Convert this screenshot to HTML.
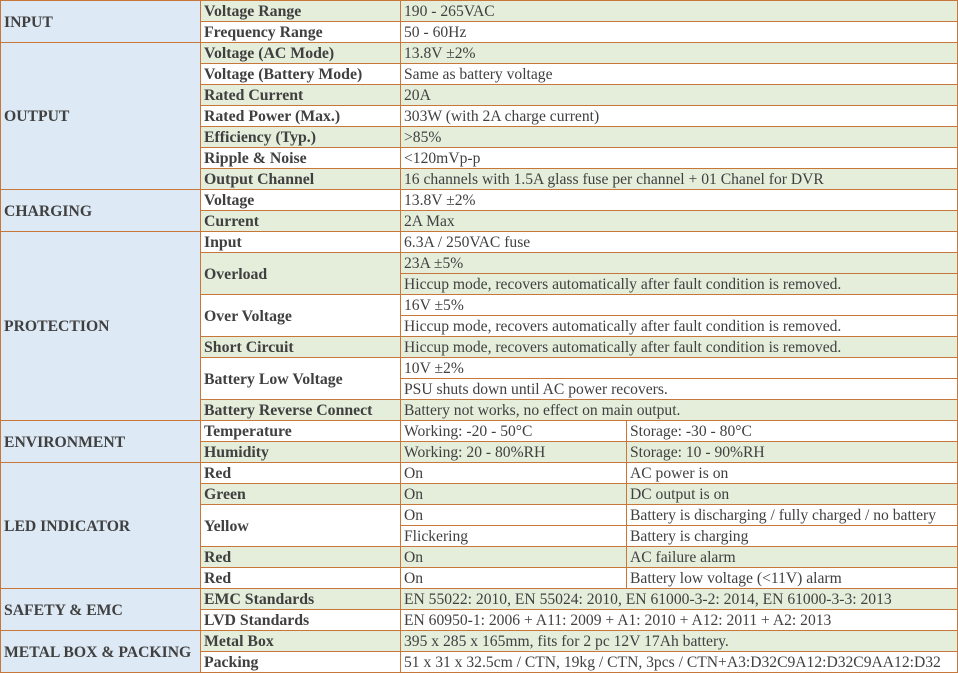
<!DOCTYPE html>
<html><head><meta charset="utf-8">
<style>
body{margin:0;background:#fff;}
table{border-collapse:collapse;table-layout:fixed;width:957px;font-family:"Liberation Serif",serif;font-size:15.6px;color:#404040;position:absolute;left:0;top:0;}
td{border:1px solid #c8773a;height:20px;padding:1px 3px 0 3px;line-height:19px;white-space:nowrap;overflow:hidden;box-sizing:border-box;}
td.c{background:#dde9f4;font-weight:bold;padding-left:3px;font-size:15.7px;}
td.l{font-weight:bold;font-size:15.8px;}
tr.g td{background:#e4eedb;}
tr.g td.c{background:#dde9f4;}
</style></head><body>
<table>
<colgroup><col style="width:200px"><col style="width:200px"><col style="width:226px"><col style="width:331px"></colgroup>
<tr class="g"><td class="c" rowspan="2">INPUT</td><td class="l">Voltage Range</td><td colspan="2">190 - 265VAC</td></tr>
<tr><td class="l">Frequency Range</td><td colspan="2">50 - 60Hz</td></tr>
<tr class="g"><td class="c" rowspan="7">OUTPUT</td><td class="l">Voltage (AC Mode)</td><td colspan="2">13.8V ±2%</td></tr>
<tr><td class="l">Voltage (Battery Mode)</td><td colspan="2">Same as battery voltage</td></tr>
<tr class="g"><td class="l">Rated Current</td><td colspan="2">20A</td></tr>
<tr><td class="l">Rated Power (Max.)</td><td colspan="2">303W (with 2A charge current)</td></tr>
<tr class="g"><td class="l">Efficiency (Typ.)</td><td colspan="2">&gt;85%</td></tr>
<tr><td class="l">Ripple &amp; Noise</td><td colspan="2">&lt;120mVp-p</td></tr>
<tr class="g"><td class="l">Output Channel</td><td colspan="2">16 channels with 1.5A glass fuse per channel + 01 Chanel for DVR</td></tr>
<tr><td class="c" rowspan="2">CHARGING</td><td class="l">Voltage</td><td colspan="2">13.8V ±2%</td></tr>
<tr class="g"><td class="l">Current</td><td colspan="2">2A Max</td></tr>
<tr><td class="c" rowspan="9">PROTECTION</td><td class="l">Input</td><td colspan="2">6.3A / 250VAC fuse</td></tr>
<tr class="g"><td class="l" rowspan="2">Overload</td><td colspan="2">23A ±5%</td></tr>
<tr class="g"><td colspan="2">Hiccup mode, recovers automatically after fault condition is removed.</td></tr>
<tr><td class="l" rowspan="2">Over Voltage</td><td colspan="2">16V ±5%</td></tr>
<tr><td colspan="2">Hiccup mode, recovers automatically after fault condition is removed.</td></tr>
<tr class="g"><td class="l">Short Circuit</td><td colspan="2">Hiccup mode, recovers automatically after fault condition is removed.</td></tr>
<tr><td class="l" rowspan="2">Battery Low Voltage</td><td colspan="2">10V ±2%</td></tr>
<tr><td colspan="2">PSU shuts down until AC power recovers.</td></tr>
<tr class="g"><td class="l">Battery Reverse Connect</td><td colspan="2">Battery not works, no effect on main output.</td></tr>
<tr><td class="c" rowspan="2">ENVIRONMENT</td><td class="l">Temperature</td><td>Working: -20 - 50°C</td><td>Storage: -30 - 80°C</td></tr>
<tr class="g"><td class="l">Humidity</td><td>Working: 20 - 80%RH</td><td>Storage: 10 - 90%RH</td></tr>
<tr><td class="c" rowspan="6">LED INDICATOR</td><td class="l">Red</td><td>On</td><td>AC power is on</td></tr>
<tr class="g"><td class="l">Green</td><td>On</td><td>DC output is on</td></tr>
<tr><td class="l" rowspan="2">Yellow</td><td>On</td><td>Battery is discharging / fully charged / no battery</td></tr>
<tr><td>Flickering</td><td>Battery is charging</td></tr>
<tr class="g"><td class="l">Red</td><td>On</td><td>AC failure alarm</td></tr>
<tr><td class="l">Red</td><td>On</td><td>Battery low voltage (&lt;11V) alarm</td></tr>
<tr class="g"><td class="c" rowspan="2">SAFETY &amp; EMC</td><td class="l">EMC Standards</td><td colspan="2">EN 55022: 2010, EN 55024: 2010, EN 61000-3-2: 2014, EN 61000-3-3: 2013</td></tr>
<tr><td class="l">LVD Standards</td><td colspan="2">EN 60950-1: 2006 + A11: 2009 + A1: 2010 + A12: 2011 + A2: 2013</td></tr>
<tr class="g"><td class="c" rowspan="2">METAL BOX &amp; PACKING</td><td class="l">Metal Box</td><td colspan="2">395 x 285 x 165mm, fits for 2 pc 12V 17Ah battery.</td></tr>
<tr><td class="l">Packing</td><td colspan="2">51 x 31 x 32.5cm / CTN, 19kg / CTN, 3pcs / CTN+A3:D32C9A12:D32C9AA12:D32</td></tr>
</table>
</body></html>
